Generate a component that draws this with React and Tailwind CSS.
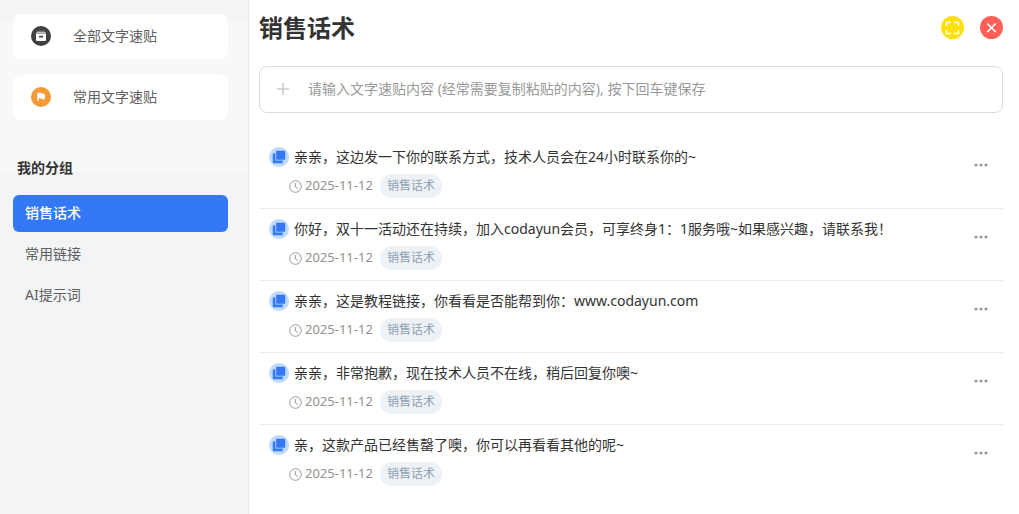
import React, { useState } from "react";

const groups = ["销售话术", "常用链接", "AI提示词"];

const snippets = [
  "亲亲，这边发一下你的联系方式，技术人员会在24小时联系你的~",
  "你好，双十一活动还在持续，加入codayun会员，可享终身1：1服务哦~如果感兴趣，请联系我！",
  "亲亲，这是教程链接，你看看是否能帮到你：www.codayun.com",
  "亲亲，非常抱歉，现在技术人员不在线，稍后回复你噢~",
  "亲，这款产品已经售罄了噢，你可以再看看其他的呢~",
];

const BoxIcon = () => (
  <svg width="20" height="20" viewBox="0 0 20 20" aria-hidden="true">
    <circle cx="10" cy="10" r="10" fill="#404040" />
    <path d="M6.3 4.7h7.4l.6 1H5.7z" fill="#8c8c8c" />
    <path d="M5.6 6h8.8l.8 1.7H4.8z" fill="#c4c4c4" />
    <path
      d="M5 8h10v6a1 1 0 0 1-1 1H6a1 1 0 0 1-1-1zM8 9.8v1.7h4V9.8z"
      fill="#fff"
      fillRule="evenodd"
    />
  </svg>
);

const FlagIcon = () => (
  <svg width="20" height="20" viewBox="0 0 20 20" aria-hidden="true">
    <circle cx="10" cy="10" r="10" fill="#f29a38" />
    <path d="M6.3 5.8h4.2l.5 1h2.9v5.4h-3.6l-.5-1H7.6V14H6.3z" fill="#fff" />
  </svg>
);

const CopyIcon = () => (
  <svg width="20" height="20" viewBox="0 0 20 20" aria-hidden="true">
    <circle cx="10" cy="10" r="10" fill="#bedaff" />
    <rect x="7.2" y="3.8" width="9" height="9" rx="0.5" fill="#3478f6" />
    <path d="M3.8 6.5h2.6v7.1h7.3v2.6H4.3a.5.5 0 0 1-.5-.5z" fill="#3478f6" />
  </svg>
);

const ClockIcon = () => (
  <svg width="13" height="13" viewBox="0 0 13 13" fill="none" stroke="#999" aria-hidden="true">
    <circle cx="6.5" cy="6.5" r="5.8" />
    <path d="M6.3 3v4l2.8 1.6" />
  </svg>
);

const Sidebar = ({ selected, setSelected }) => {
  return (
    <aside className="w-[249px] shrink-0 border-r border-[#e5e8ea] bg-[linear-gradient(#f3f5f4_22px,#f8f8f8_22px,#f8f8f8_173px,#f2f4f6_173px)] pt-[14px] pr-5 pl-[13px]">
      <div className="flex flex-col gap-4">
        <button className="flex h-[45px] items-center gap-[22px] rounded-lg bg-white pb-[2px] pl-[18px] text-[#606060]">
          <BoxIcon />
          全部文字速贴
        </button>
        <button className="flex h-[45px] items-center gap-[22px] rounded-lg bg-white pb-[2px] pl-[18px] text-[#606060]">
          <FlagIcon />
          常用文字速贴
        </button>
      </div>
      <h2 className="mt-[38px] mb-[17px] pl-1 font-bold text-[#333]">我的分组</h2>
      <nav className="flex flex-col gap-1">
        {groups.map((group) => (
          <button
            key={group}
            onClick={() => setSelected(group)}
            className={
              group === selected
                ? "h-[37px] rounded-md bg-[#3478f6] pb-[2px] pl-3 text-left font-medium text-white"
                : "h-[37px] rounded-md pb-[2px] pl-3 text-left text-[#606060]"
            }
          >
            {group}
          </button>
        ))}
      </nav>
    </aside>
  );
};

const Snippet = ({ text, group }) => {
  return (
    <li className="flex h-[72px] items-start justify-between border-b border-[#ececec] pt-[10px] pr-[15px] pl-[10px] last:border-transparent">
      <div>
        <div className="flex items-center gap-[5px] text-[#333]">
          <CopyIcon />
          <p>{text}</p>
        </div>
        <div className="mt-[7px] flex h-6 items-center pl-5 text-[13px] text-[#909090]">
          <ClockIcon />
          <time dateTime="2025-11-12" className="ml-[3px] pb-[2px]">
            2025-11-12
          </time>
          <span className="ml-[7px] flex h-6 items-center rounded-full bg-[#ecf2f5] px-[7px] text-[12px] text-[#8fa1b2]">
            {group}
          </span>
        </div>
      </div>
      <button aria-label="更多" className="mt-[6px] flex h-6 items-center">
        <svg width="14" height="4" viewBox="0 0 14 4" fill="#9299a5" aria-hidden="true">
          <circle cx="2" cy="2" r="1.6" />
          <circle cx="7" cy="2" r="1.6" />
          <circle cx="12" cy="2" r="1.6" />
        </svg>
      </button>
    </li>
  );
};

export default function App() {
  const [selected, setSelected] = useState("销售话术");

  return (
    <div className="flex min-h-screen bg-white font-['Noto_Sans','Noto_Sans_CJK_SC',sans-serif] text-[14px] leading-5">
      <Sidebar selected={selected} setSelected={setSelected} />
      <main className="min-w-0 flex-1 pr-4 pl-[10px]">
        <header className="flex h-14 items-center justify-between">
          <h1 className="text-[24px] leading-8 font-bold text-[#333]">{selected}</h1>
          <div className="flex gap-4 pb-[2px]">
            <button aria-label="全屏">
              <svg width="23" height="23" viewBox="0 0 23 23" fill="none" aria-hidden="true">
                <circle cx="11.5" cy="11.5" r="11.5" fill="#ffdf10" />
                <path
                  d="M5.5 10V6.5h4.5M13 6.5h4.5V10M17.5 14v3.5H13M10 17.5H5.5V14"
                  stroke="#fff"
                  strokeWidth="1.3"
                />
              </svg>
            </button>
            <button aria-label="关闭">
              <svg width="23" height="23" viewBox="0 0 23 23" fill="none" aria-hidden="true">
                <circle cx="11.5" cy="11.5" r="11.5" fill="#ff5f57" />
                <path d="M7.3 7.5l8.4 8.5M15.7 7.5L7.3 16" stroke="#fff" strokeWidth="1.7" />
              </svg>
            </button>
          </div>
        </header>
        <label className="mt-[10px] flex h-[47px] items-center gap-[19px] rounded-lg border border-[#dcdcdc] pr-4 pb-[2px] pl-[17px]">
          <svg width="12" height="12" viewBox="0 0 12 12" stroke="#c8c9cc" strokeWidth="1.5" aria-hidden="true">
            <path d="M6 0v12M0 6h12" />
          </svg>
          <input
            type="text"
            aria-label="文字速贴内容"
            placeholder="请输入文字速贴内容 (经常需要复制粘贴的内容), 按下回车键保存"
            className="min-w-0 flex-1 outline-none placeholder:text-[#999]"
          />
        </label>
        <ul className="mt-6">
          {snippets.map((text) => (
            <Snippet key={text} text={text} group="销售话术" />
          ))}
        </ul>
      </main>
    </div>
  );
}
